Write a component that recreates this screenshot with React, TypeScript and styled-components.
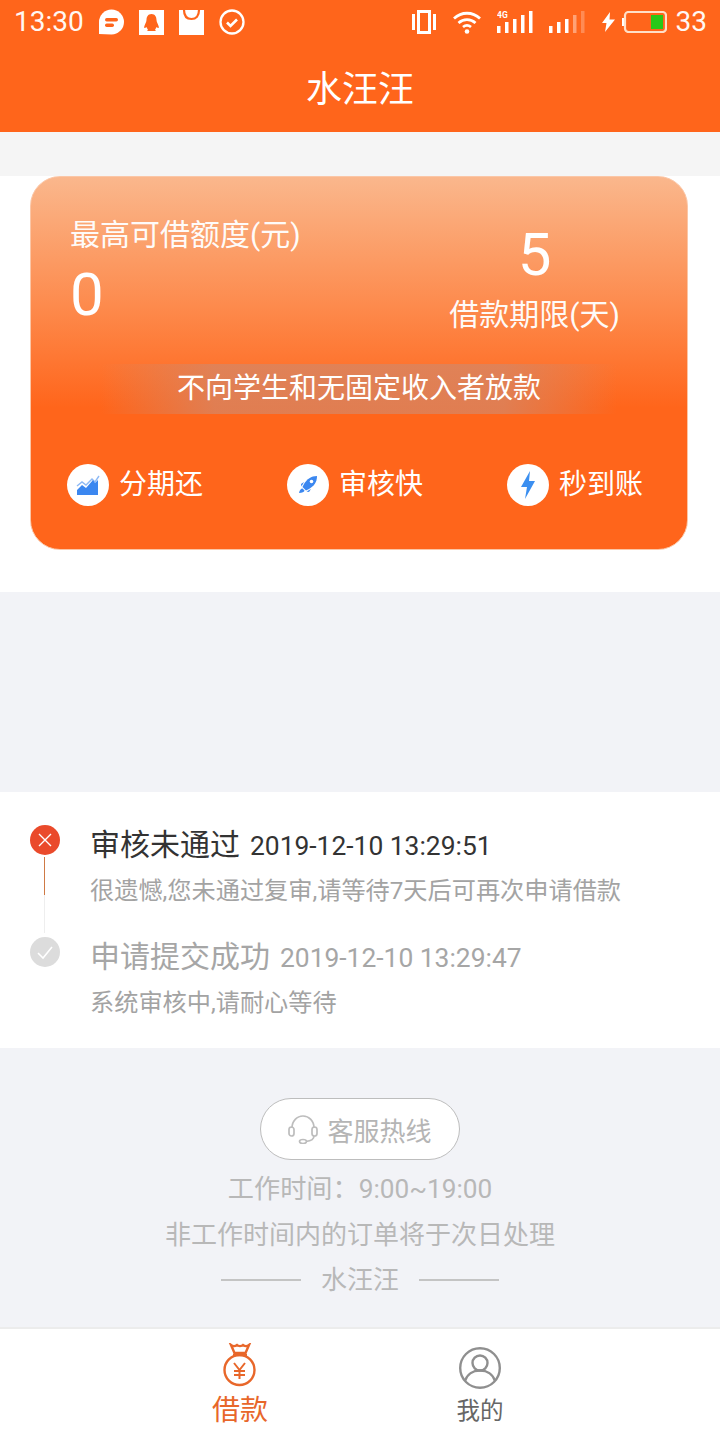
import React from 'react';
import styled, { createGlobalStyle } from 'styled-components';

const GlobalStyle = createGlobalStyle`
  html, body {
    margin: 0;
    padding: 0;
    background: #f2f3f7;
    font-family: Roboto, "Noto Sans CJK SC", sans-serif;
  }
  * { box-sizing: border-box; }
`;

const Page = styled.div`
  width: 720px;
  height: 1440px;
  display: flex;
  flex-direction: column;
  overflow: hidden;
  background: #f2f3f7;
`;

const Header = styled.header`
  height: 132px;
  flex: none;
  background: #ff651b;
  color: #fff;
  display: flex;
  flex-direction: column;
`;

const StatusBar = styled.div`
  height: 44px;
  padding: 0 13px 0 14px;
  display: flex;
  align-items: center;
  justify-content: space-between;
`;

const StatusGroup = styled.div`
  display: flex;
  align-items: center;
`;

const StatusGlyph = styled.svg<{ $left: number }>`
  display: block;
  margin-left: ${p => p.$left}px;
`;

const StatusText = styled.span<{ $left?: number }>`
  font-size: 28px;
  line-height: 44px;
  margin-left: ${p => p.$left || 0}px;
  color: #fff;
  opacity: 0.95;
`;

const Title = styled.h1`
  margin: 23px 0 0;
  font-size: 36px;
  font-weight: 400;
  text-align: center;
  line-height: 46px;
`;

const TopGap = styled.div`
  height: 44px;
  flex: none;
  background: #f5f5f5;
`;

const CardSection = styled.section`
  height: 416px;
  flex: none;
  background: #fff;
  padding: 0 32px 42px 30px;
`;

const Card = styled.div`
  height: 374px;
  border-radius: 30px;
  border: 1px solid #fbc6a6;
  background: linear-gradient(180deg, #fab78c 0%, #fd8a4c 35%, #ff651b 62%, #ff651b 100%);
  color: #fff;
  display: flex;
  flex-direction: column;
`;

const Quota = styled.div`
  height: 166px;
  display: flex;
  justify-content: space-between;
  padding: 0 67px 0 39px;
`;

const QuotaLeft = styled.div`
  display: flex;
  flex-direction: column;
  padding-top: 37px;
`;

const QuotaRight = styled.div`
  display: flex;
  flex-direction: column;
  align-items: center;
  padding-top: 44px;
`;

const QuotaLabel = styled.div<{ $top?: number }>`
  font-size: 30px;
  line-height: 42px;
  margin-top: ${p => p.$top || 0}px;
  opacity: 0.96;
`;

const QuotaValue = styled.div<{ $top: number }>`
  font-size: 60px;
  font-weight: 400;
  line-height: 68px;
  margin-top: ${p => p.$top}px;
`;

const Notice = styled.div`
  height: 50px;
  margin: 21px 70px 0;
  background: linear-gradient(90deg, rgba(214, 134, 100, 0) 0%, rgba(214, 134, 100, 0.75) 22%, rgba(214, 134, 100, 0.75) 78%, rgba(214, 134, 100, 0) 100%);
  font-size: 28px;
  line-height: 50px;
  text-align: center;
`;

const Features = styled.div`
  margin-top: 50px;
  padding-left: 36px;
  display: grid;
  grid-template-columns: repeat(3, 220px);
`;

const Feature = styled.div`
  display: flex;
  align-items: center;
  gap: 10px;
  font-size: 28px;
  line-height: 42px;
`;

const FeatureIcon = styled.span`
  width: 42px;
  height: 42px;
  border-radius: 50%;
  background: #fff;
  display: flex;
  align-items: center;
  justify-content: center;
`;

const MidGap = styled.div`
  height: 200px;
  flex: none;
`;

const Timeline = styled.section`
  height: 256px;
  flex: none;
  background: #fff;
  padding: 32px 0 0 30px;
`;

const Step = styled.div`
  display: flex;
  height: 112px;
`;

const Rail = styled.div`
  width: 30px;
  flex: none;
  display: flex;
  flex-direction: column;
  align-items: center;
`;

const Dot = styled.div<{ $color: string }>`
  width: 30px;
  height: 30px;
  flex: none;
  margin-top: 1px;
  border-radius: 50%;
  background: ${p => p.$color};
  display: flex;
  align-items: center;
  justify-content: center;
`;

const RailLine = styled.div`
  margin: 2px 1px 0 0;
  width: 1px;
  height: 38px;
  background: #cf7a45;
  box-shadow: 0 38px 0 #eeeeee;
`;

const StepBody = styled.div`
  margin-left: 31px;
`;

const StepHead = styled.div<{ $muted?: boolean }>`
  display: flex;
  align-items: baseline;
  height: 42px;
  line-height: 42px;
  color: ${p => (p.$muted ? '#a6a6a6' : '#333')};
`;

const StepTitle = styled.span`
  font-size: 30px;
  margin-left: -1px;
`;

const StepTime = styled.span`
  font-size: 26.4px;
  margin-left: 10px;
`;

const StepText = styled.div`
  font-size: 24.2px;
  line-height: 34px;
  margin: 8px 0 0 -1px;
  color: #a3a3a3;
`;

const Footer = styled.section`
  flex: 1;
  padding-top: 50px;
  display: flex;
  flex-direction: column;
  align-items: center;
  color: #b8b8b8;
`;

const HotlineButton = styled.button`
  width: 200px;
  height: 62px;
  padding: 0;
  border: 1px solid #bdbdbd;
  border-radius: 31px;
  background: #fff;
  color: #b5b5b5;
  font: inherit;
  font-size: 26px;
  display: flex;
  align-items: center;
  justify-content: center;
  gap: 9px;
`;

const FooterLine = styled.div`
  font-size: 26px;
  line-height: 46px;
`;

const Hours = styled(FooterLine)`
  margin-top: 6px;
  font-size: 26.2px;
`;

const Brand = styled.div`
  display: flex;
  align-items: center;
  gap: 20px;
  font-size: 26px;
  line-height: 44px;
`;

const BrandRule = styled.span`
  width: 80px;
  height: 2px;
  background: #c4c4c4;
`;

const TabBar = styled.nav`
  height: 113px;
  flex: none;
  background: #fff;
  border-top: 2px solid #ececec;
  padding-top: 14px;
  display: flex;
  justify-content: center;
  gap: 168px;
`;

const Tab = styled.div<{ $active?: boolean }>`
  width: 72px;
  display: flex;
  flex-direction: column;
  align-items: center;
  color: ${p => (p.$active ? '#e8672a' : '#666')};
  font-size: ${p => (p.$active ? 28 : 23.5)}px;
  line-height: 36px;
`;

const TabIcon = styled.div<{ $top: number }>`
  height: 50px;
  padding-top: ${p => p.$top}px;
`;

const StatusIcons = () => (
  <>
    <StatusGlyph $left={15} width="26" height="26" viewBox="0 0 26 26">
      <path d="M0 25V13a12.500 12.500 0 1 1 12.500 12.500z" fill="#fff" />
      <rect x="6" y="9" width="13" height="3.500" rx="1.700" fill="#ff651b" />
      <rect x="6" y="14.500" width="9" height="3.500" rx="1.700" fill="#ff651b" />
    </StatusGlyph>
    <StatusGlyph $left={14} width="25" height="25" viewBox="0 0 25 25">
      <rect width="25" height="25" fill="#fff" />
      <path d="M12.500 4c-3.600 0-5 3-5 6 0 2-2 5-2.500 7.500 1 1 2 0 2.500-.5.300 1 1 2 1.500 2.500-1 .500-1 1.500 0 1.500h7c1 0 1-1 0-1.500.500-.500 1.200-1.500 1.500-2.500.500.500 1.500 1.500 2.500.5-.500-2.500-2.500-5.500-2.500-7.500 0-3-1.400-6-5-6z" fill="#ff651b" />
    </StatusGlyph>
    <StatusGlyph $left={15} width="25" height="25" viewBox="0 0 25 25">
      <rect width="25" height="25" fill="#fff" />
      <path d="M5 0c0 6 3 9 7.500 9S20 6 20 0" fill="none" stroke="#ff651b" strokeWidth="2.200" />
    </StatusGlyph>
    <StatusGlyph $left={15} width="26" height="26" viewBox="0 0 26 26">
      <circle cx="13" cy="13" r="11.500" fill="none" stroke="#fff" strokeWidth="2.300" />
      <path d="M8 13.500l3.500 3.500 6.500-6.500" fill="none" stroke="#fff" strokeWidth="2.600" />
    </StatusGlyph>
  </>
);

const StatusRight = () => (
  <>
    <StatusGlyph $left={0} width="24" height="24" viewBox="0 0 24 24">
      <rect x="0" y="4" width="3" height="16" fill="#fff" />
      <rect x="21" y="4" width="3" height="16" fill="#fff" />
      <rect x="6.500" y="1.500" width="11" height="21" fill="none" stroke="#fff" strokeWidth="3" />
    </StatusGlyph>
    <StatusGlyph $left={16} width="30" height="24" viewBox="0 0 30 24">
      <path d="M2 8.500c7.500-7 18.500-7 26 0M6.500 13c5-4.500 12-4.500 17 0M11 17c2.500-2 5.500-2 8 0" fill="none" stroke="#fff" strokeWidth="2.800" />
      <circle cx="15" cy="21.500" r="2.300" fill="#fff" />
    </StatusGlyph>
    <StatusGlyph $left={15} width="36" height="24" viewBox="0 0 36 24">
      <text x="0" y="8" fontSize="8.500" fontWeight="700" fill="#fff" fontFamily="Roboto, sans-serif">4G</text>
      <rect x="0" y="16" width="3.500" height="7" fill="#fff" />
      <rect x="8" y="12" width="3.500" height="11" fill="#fff" />
      <rect x="16" y="9" width="3.500" height="14" fill="#fff" />
      <rect x="24" y="5" width="3.500" height="18" fill="#fff" />
      <rect x="32" y="1" width="3.500" height="22" fill="#fff" />
    </StatusGlyph>
    <StatusGlyph $left={16} width="36" height="24" viewBox="0 0 36 24">
      <rect x="0" y="16" width="3.500" height="7" fill="#fff" />
      <rect x="8" y="12" width="3.500" height="11" fill="#fff" />
      <rect x="16" y="9" width="3.500" height="14" fill="#fff" />
      <rect x="24" y="5" width="3.500" height="18" fill="#fff" opacity="0.4" />
      <rect x="32" y="1" width="3.500" height="22" fill="#fff" opacity="0.25" />
    </StatusGlyph>
    <StatusGlyph $left={17} width="13" height="20" viewBox="0 0 13 20">
      <path d="M8 0L0 11h4.500L3 20l10-12.500H7.500z" fill="#fff" />
    </StatusGlyph>
    <StatusGlyph $left={7} width="45" height="22" viewBox="0 0 45 22">
      <rect x="0" y="7" width="2.500" height="8" fill="#fff" />
      <rect x="3" y="1" width="41" height="20" rx="3.500" fill="none" stroke="#ffe0c8" strokeWidth="2.200" />
      <rect x="29" y="4" width="12" height="14" fill="#28c818" />
    </StatusGlyph>
    <StatusText $left={9}>33</StatusText>
  </>
);

const ChartIcon = () => (
  <svg width="24" height="22" viewBox="0 0 24 22">
    <path d="M1 12l5-4 4 3 6-6 3 3 4-6" fill="none" stroke="#8db9f5" strokeWidth="1.400" />
    <path d="M1 16l5-5 4 3 7-8 2 3 3-3v15H1z" fill="#3b87f0" />
  </svg>
);

const RocketIcon = () => (
  <svg width="24" height="24" viewBox="0 0 24 24">
    <path d="M21 3c-6 0-10 3-13 8l-1.500 3 3.500 3.500 3-1.500c5-3 8-7 8-13z" fill="#3b87f0" />
    <circle cx="15.500" cy="8.500" r="1.800" fill="#fff" />
    <path d="M3 20c.500-3 2-4.500 3.500-4.500l2 2C8.500 19 6 20 3 20zM5 11l3-2-2.500 4.500zM13 19l2-3-4.500 2.500z" fill="#3b87f0" />
  </svg>
);

const BoltIcon = () => (
  <svg width="16" height="28" viewBox="0 0 16 28">
    <path d="M10 0L1 16h6L5 28 15 10H9z" fill="#3b8ff0" />
  </svg>
);

const MoneyBagIcon = () => (
  <svg width="36" height="44" viewBox="0 0 36 44" fill="none" stroke="#e8672a" strokeWidth="2.400">
    <path d="M9 2c2 1.500 4 1.500 6 0 1.500 1.500 4.500 1.500 6 0 2 1.500 4 1.500 6 0l-3.500 8h-11z" />
    <path d="M11 12h14" />
    <circle cx="17.500" cy="27" r="15" />
    <path d="M12 20l5.500 7 5.500-7M17.500 27v9M12 28h11M12 32h11" strokeWidth="2" />
  </svg>
);

const UserIcon = () => (
  <svg width="42" height="42" viewBox="0 0 42 42" fill="none" stroke="#8f8f8f" strokeWidth="2.400">
    <circle cx="21" cy="21" r="19.800" />
    <circle cx="21" cy="16" r="7.500" />
    <path d="M6 34c2-7 8-10.500 15-10.500S34 27 36 34" />
  </svg>
);

const HeadsetIcon = () => (
  <svg width="30" height="30" viewBox="0 0 30 30" fill="none" stroke="#bdbdbd" strokeWidth="1.700">
    <path d="M4 14C4 7 9 2 15 2s11 5 11 12" />
    <rect x="1" y="13" width="5" height="9" rx="2.500" />
    <rect x="24" y="13" width="5" height="9" rx="2.500" />
    <path d="M26 22c0 3-3 5-8 5.500" />
    <ellipse cx="15" cy="27.500" rx="3.500" ry="2" />
  </svg>
);

const features = [
  { label: '分期还', icon: <ChartIcon /> },
  { label: '审核快', icon: <RocketIcon /> },
  { label: '秒到账', icon: <BoltIcon /> }
];

export default function App() {
  return (
    <Page>
      <GlobalStyle />
      <Header>
        <StatusBar>
          <StatusGroup>
            <StatusText>13:30</StatusText>
            <StatusIcons />
          </StatusGroup>
          <StatusGroup>
            <StatusRight />
          </StatusGroup>
        </StatusBar>
        <Title>水汪汪</Title>
      </Header>
      <TopGap />
      <CardSection>
        <Card>
          <Quota>
            <QuotaLeft>
              <QuotaLabel>最高可借额度(元)</QuotaLabel>
              <QuotaValue $top={5}>0</QuotaValue>
            </QuotaLeft>
            <QuotaRight>
              <QuotaValue $top={0}>5</QuotaValue>
              <QuotaLabel $top={5}>借款期限(天)</QuotaLabel>
            </QuotaRight>
          </Quota>
          <Notice>不向学生和无固定收入者放款</Notice>
          <Features>
            {features.map(f => (
              <Feature key={f.label}>
                <FeatureIcon>{f.icon}</FeatureIcon>
                {f.label}
              </Feature>
            ))}
          </Features>
        </Card>
      </CardSection>
      <MidGap />
      <Timeline>
        <Step>
          <Rail>
            <Dot $color="#ea4a2b">
              <svg width="18" height="18" viewBox="0 0 18 18">
                <path d="M3 3l12 12M15 3L3 15" stroke="#fff" strokeWidth="1.400" />
              </svg>
            </Dot>
            <RailLine />
          </Rail>
          <StepBody>
            <StepHead>
              <StepTitle>审核未通过</StepTitle>
              <StepTime>2019-12-10 13:29:51</StepTime>
            </StepHead>
            <StepText>很遗憾,您未通过复审,请等待7天后可再次申请借款</StepText>
          </StepBody>
        </Step>
        <Step>
          <Rail>
            <Dot $color="#dcdcdc">
              <svg width="20" height="18" viewBox="0 0 20 18">
                <path d="M3 10l5 5L17 4" fill="none" stroke="#fff" strokeWidth="1.600" />
              </svg>
            </Dot>
          </Rail>
          <StepBody>
            <StepHead $muted>
              <StepTitle>申请提交成功</StepTitle>
              <StepTime>2019-12-10 13:29:47</StepTime>
            </StepHead>
            <StepText>系统审核中,请耐心等待</StepText>
          </StepBody>
        </Step>
      </Timeline>
      <Footer>
        <HotlineButton>
          <HeadsetIcon />
          客服热线
        </HotlineButton>
        <Hours>工作时间：9:00~19:00</Hours>
        <FooterLine>非工作时间内的订单将于次日处理</FooterLine>
        <Brand>
          <BrandRule />
          水汪汪
          <BrandRule />
        </Brand>
      </Footer>
      <TabBar>
        <Tab $active>
          <TabIcon $top={0}>
            <MoneyBagIcon />
          </TabIcon>
          借款
        </Tab>
        <Tab>
          <TabIcon $top={4}>
            <UserIcon />
          </TabIcon>
          我的
        </Tab>
      </TabBar>
    </Page>
  );
}
